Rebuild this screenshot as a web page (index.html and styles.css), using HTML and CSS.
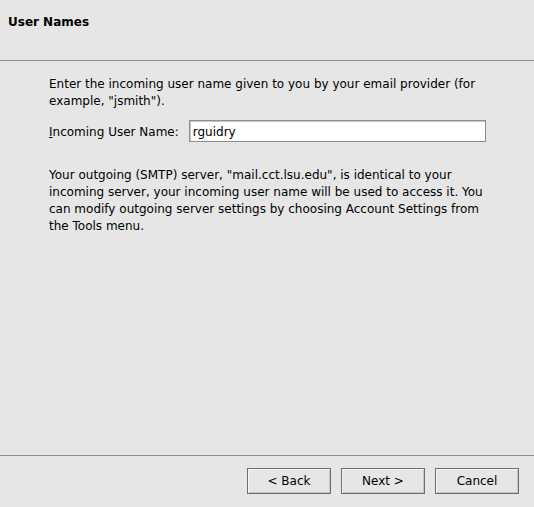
FILE: index.html
```html
<!DOCTYPE html>
<html>
<head>
<meta charset="utf-8">
<link rel="stylesheet" href="styles.css">
</head>
<body>
<div class="dialog">
  <div class="header"><span class="title">User Names</span></div>
  <div class="content">
    <p class="intro">Enter the incoming user name given to you by your email provider (for example, "jsmith").</p>
    <div class="field-row">
      <label class="label"><span class="key">I</span>ncoming User Name:</label>
      <div class="input">rguidry</div>
    </div>
    <p class="note">Your outgoing (SMTP) server, "mail.cct.lsu.edu", is identical to your incoming server, your incoming user name will be used to access it. You can modify outgoing server settings by choosing Account Settings from the Tools menu.</p>
  </div>
  <div class="footer">
    <div class="btn">&lt; Back</div>
    <div class="btn">Next &gt;</div>
    <div class="btn">Cancel</div>
  </div>
</div>
</body>
</html>
```
FILE: styles.css
```css
html, body {
  margin: 0;
  padding: 0;
  background: #e6e6e6;
}
.dialog {
  width: 534px;
  height: 507px;
  display: flex;
  flex-direction: column;
  font-family: "DejaVu Sans", sans-serif;
  font-size: 12px;
  color: #000;
}
.header {
  height: 61px;
  box-sizing: border-box;
  padding: 14px 0 0 8px;
  border-bottom: 1px solid #8c8c8c;
}
.title {
  font-weight: bold;
  line-height: 17px;
}
.content {
  flex: 1;
  padding: 15px 48px 0 49px;
}
.content p {
  margin: 0;
  line-height: 17px;
}
.field-row {
  display: flex;
  align-items: center;
  margin-top: 10px;
  gap: 10px;
}
.label {
  line-height: 17px;
  padding-top: 2px;
}
.key {
  text-decoration: underline;
}
.input {
  flex: 1;
  height: 22px;
  box-sizing: border-box;
  border: 1px solid #8e8e8e;
  box-shadow: inset 1px 1px 0 #c8c8c8;
  background: #fff;
  padding: 1px 3px 0;
  line-height: 20px;
}
.note {
  margin-top: 25px !important;
}
.footer {
  height: 52px;
  box-sizing: border-box;
  border-top: 1px solid #8c8c8c;
  padding: 12px 15px 0 0;
  display: flex;
  justify-content: flex-end;
  gap: 10px;
}
.btn {
  width: 84px;
  height: 26px;
  box-sizing: border-box;
  border: 1px solid #6e6e6e;
  box-shadow: inset 1px 1px 0 #f4f4f4, inset -1px -1px 0 #c4c4c4;
  background: #e6e6e6;
  text-align: center;
  line-height: 24px;
}
```
